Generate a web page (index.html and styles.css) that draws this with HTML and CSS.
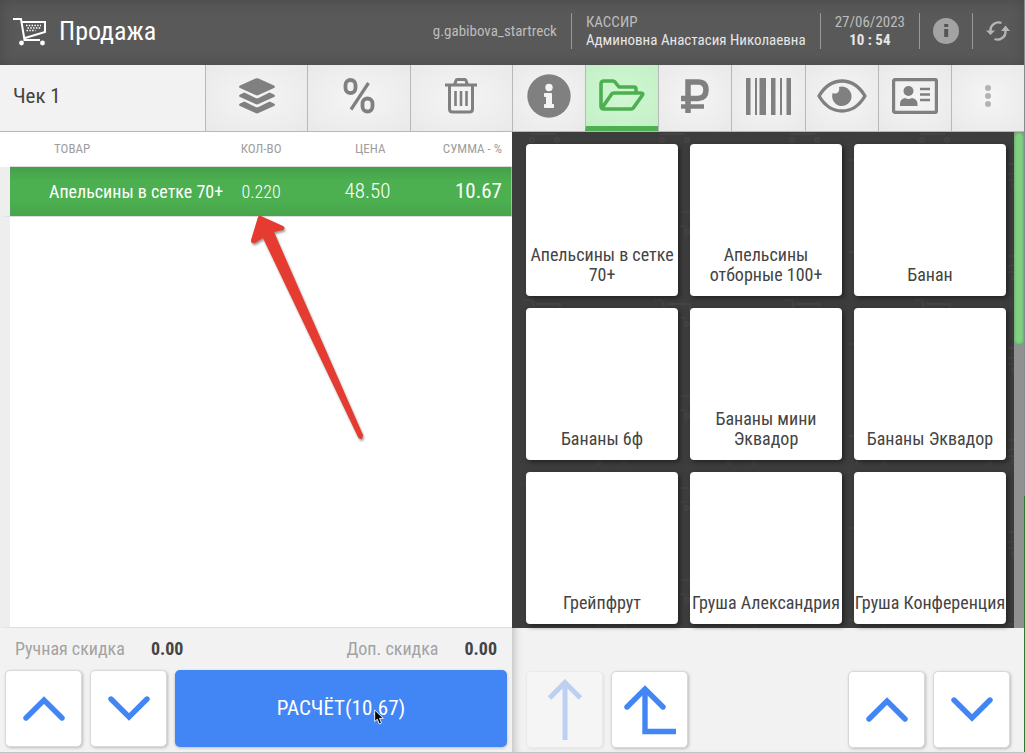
FILE: index.html
```html
<!doctype html>
<html lang="ru">
<head>
<meta charset="utf-8">
<meta name="viewport" content="width=device-width, initial-scale=1">
<title>Продажа</title>
<link rel="stylesheet" href="styles.css">
</head>
<body>

<!-- icons used more than once -->
<svg class="sprite" aria-hidden="true">
    <symbol id="up" viewBox="0 0 42 26"><path d="M3 22 21 4l18 18" fill="none" stroke="currentColor" stroke-width="5.400" stroke-linecap="round"/></symbol>
    <symbol id="down" viewBox="0 0 42 26"><path d="M3 3l18 18L39 3" fill="none" stroke="currentColor" stroke-width="5.400" stroke-linecap="round"/></symbol>
</svg>

<div class="app">
    <header class="header">
        <svg class="cart" viewBox="0 0 34 30" width="34" height="30" fill="none" stroke="#fff" stroke-width="2">
            <path d="M0 3h8l3.500 21H27M9.500 6h22.500v10L12 22"/>
            <path d="M13 9.500h15M14.500 12h13M13.500 14.500h9" stroke-width="1.500" stroke-dasharray="1.500 1.300"/>
            <circle cx="8.500" cy="27" r="2.400" fill="#fff" stroke="none"/>
            <circle cx="29.500" cy="27" r="2.400" fill="#fff" stroke="none"/>
        </svg>
        <h1>Продажа</h1>
        <div class="user">g.gabibova_startreck</div>
        <div class="cell wide">
            <span>КАССИР</span>
            <b>Админовна Анастасия Николаевна</b>
        </div>
        <div class="cell wide date">
            <span>27/06/2023</span>
            <b class="time">10 : 54</b>
        </div>
        <div class="cell">
            <button class="plain" aria-label="Информация">
                <svg viewBox="0 0 26 26" width="26" height="26"><circle cx="13" cy="13" r="13" fill="#a3a3a3"/><path d="M11.200 6h4v3h-4zM11.200 11h4v8h-4z" fill="#555"/></svg>
            </button>
        </div>
        <div class="cell">
            <button class="plain" aria-label="Обновить">
                <svg viewBox="0 0 24 24" width="24" height="24" fill="none" stroke="#b5b5b5" stroke-width="2.400">
                    <path d="M4.500 12a8 8 0 0 1 11-8M8.500 20a8 8 0 0 0 11-8"/>
                    <path d="M0 11.500h9L4.500 16zM15 12h9l-4.500-5.500z" fill="#b5b5b5" stroke="none"/>
                </svg>
            </button>
        </div>
    </header>

    <main class="panels">
        <section class="panel receipt">
            <div class="toolbar">
                <h2>Чек 1</h2>
                <button class="tool" aria-label="Отложенные чеки">
                    <svg viewBox="0 0 36 36" width="36" height="36" fill="#808080">
                        <path d="M16.500.5q1.500-.7 3 0L35 7.500q2 1.300 0 2.600l-15.500 7q-1.500.7-3 0L1 10.100q-2-1.300 0-2.600z"/>
                        <path d="M5.500 14.500 16.500 20q1.500.7 3 0l11-5.500L35 16.600q2 1.300 0 2.500l-15.500 7q-1.500.7-3 0L1 19.100q-2-1.200 0-2.500z"/>
                        <path d="M5.500 23.500 16.500 29q1.500.7 3 0l11-5.500L35 25.600q2 1.300 0 2.500l-15.500 7q-1.500.7-3 0L1 28.100q-2-1.200 0-2.500z"/>
                    </svg>
                </button>
                <button class="tool" aria-label="Скидка">
                    <svg viewBox="0 0 32 36" width="32" height="36" fill="none" stroke="#808080" stroke-width="3.800">
                        <rect x="2.500" y="2" width="10" height="13" rx="5"/>
                        <rect x="19.500" y="20.500" width="10" height="13" rx="5"/>
                        <path d="M25.500 5 8 31.500" stroke-width="3.200"/>
                    </svg>
                </button>
                <button class="tool" aria-label="Удалить">
                    <svg viewBox="0 0 32 36" width="32" height="36" fill="none" stroke="#808080" stroke-width="3">
                        <path d="M0 7h32M4.500 8v23q0 3 3 3h17q3 0 3-3V8M9.500 7l1.500-4.500q.3-1 1.500-1h7q1.200 0 1.500 1L22.500 7"/>
                        <path d="M10.500 13v15M16 13v15M21.500 13v15" stroke-width="2.600"/>
                    </svg>
                </button>
            </div>
            <table class="goods">
                <thead>
                    <tr><th class="name">ТОВАР</th><th class="qty">КОЛ-ВО</th><th class="price">ЦЕНА</th><th class="sum">СУММА - %</th></tr>
                </thead>
                <tbody>
                    <tr><td class="name">Апельсины в сетке 70+</td><td class="qty">0.220</td><td class="price">48.50</td><td class="sum">10.67</td></tr>
                </tbody>
            </table>
            <div class="empty"></div>
            <div class="discounts">
                <span>Ручная скидка</span><b>0.00</b>
                <span class="extra">Доп. скидка</span><b>0.00</b>
            </div>
            <div class="actions">
                <button class="square" aria-label="Вверх"><svg width="42" height="26"><use href="#up"/></svg></button>
                <button class="square" aria-label="Вниз"><svg width="42" height="26"><use href="#down"/></svg></button>
                <button class="pay">РАСЧЁТ(10.67)
                    <svg class="cursor" viewBox="0 0 10 16" width="10" height="16"><path d="M.7 1v11.500l2.600-2.300 2 4.800 2.200-1-2-4.600h3.800z" fill="#000" stroke="#fff" stroke-width=".9"/></svg>
                </button>
            </div>
            <svg class="pointer" viewBox="0 0 124 230" width="124" height="230">
                <path d="M18 2q1-2 3-1l22 10q3 2 0 4l-9 2 89 203q0 3-2 4-2 0-3-2L23 23l-8 5q-4 1-4-3z" fill="#e53b30"/>
            </svg>
        </section>

        <section class="panel catalog">
            <div class="toolbar">
                <button class="tool" aria-label="Информация">
                    <svg viewBox="0 0 44 44" width="44" height="44"><circle cx="22" cy="22" r="21.700" fill="#808080"/><circle cx="22" cy="13.500" r="3.700" fill="#f4f4f4"/><path d="M17.500 19.500h7v11h2v3h-9v-3h2v-8h-2z" fill="#f4f4f4" stroke="#f4f4f4"/></svg>
                </button>
                <button class="tool active" aria-label="Каталог">
                    <svg viewBox="0 0 46 32" width="46" height="32" fill="none" stroke="#4caf50" stroke-width="3.600" stroke-linejoin="round">
                        <path d="M37 13V10q0-2-2-2H20l-4-5q-1-1-2-1H5Q2 2 2 5v22q0 3 3 3h27q2 0 3-2l8.500-12q1-2-2-2H15q-2 0-3 2L3 29"/>
                    </svg>
                </button>
                <button class="tool" aria-label="Цена">
                    <svg viewBox="0 0 30 36" width="30" height="36" fill="none" stroke="#808080" stroke-width="5.500">
                        <path d="M8 35V4H18q8 0 8 8T18 20.500H1"/><path d="M1 28.500h23" stroke-width="4.500"/>
                    </svg>
                </button>
                <button class="tool" aria-label="Штрихкод">
                    <svg viewBox="0 0 45 37" width="45" height="37" fill="#808080"><path d="M0 0h4.500v37H0zM9 0h2v37H9zM13.500 0h6.500v37h-6.500zM25 0h4.500v37H25zM34 0h2v37h-2zM40.500 0H45v37h-4.500z"/></svg>
                </button>
                <button class="tool" aria-label="Просмотр">
                    <svg viewBox="0 0 50 34" width="50" height="34"><path d="M2 17Q11 2 25 2t23 15Q39 32 25 32T2 17z" fill="none" stroke="#808080" stroke-width="3.400" stroke-linejoin="round"/><path d="M22 8a9.700 9.700 0 1 1-6.300 6q4.500 1.500 6-1.500 1-2.500.3-4.500z" fill="#808080"/></svg>
                </button>
                <button class="tool" aria-label="Клиент">
                    <svg viewBox="0 0 46 36" width="46" height="36" fill="#808080">
                        <rect x="1.500" y="1.500" width="43" height="33" rx="2" fill="none" stroke="#808080" stroke-width="3.400"/>
                        <circle cx="16.500" cy="13" r="5"/><path d="M8 28v-2q0-5 5-6 3.500 2 7 0 5.500 1 5.500 6v2z"/>
                        <path d="M28 11h10M28 16.500h10M28 22h10" stroke="#808080" stroke-width="2.600"/>
                    </svg>
                </button>
                <button class="tool" aria-label="Ещё">
                    <svg viewBox="0 0 8 24" width="8" height="24" fill="#b3b3b3"><circle cx="4" cy="4" r="3"/><circle cx="4" cy="12" r="3"/><circle cx="4" cy="20" r="3"/></svg>
                </button>
            </div>
            <div class="shelf">
                <svg class="wallpaper" aria-hidden="true">
                    <defs>
                        <pattern id="carts" width="130" height="92" patternUnits="userSpaceOnUse">
                            <g fill="none" stroke="#444" stroke-width="2">
                                <path d="M12 76h8l4 16M24 80h24v8M18 2h25"/><circle cx="20" cy="8" r="2"/><circle cx="45" cy="8" r="2"/>
                                <path d="M77 28h8l5 20h25M89 32h24v9l-22 5"/><circle cx="87" cy="54" r="2"/><circle cx="112" cy="54" r="2"/>
                            </g>
                        </pattern>
                    </defs>
                    <rect width="100%" height="100%" fill="url(#carts)"/>
                </svg>
                <div class="tiles">
                    <button class="tile">Апельсины в сетке 70+</button>
                    <button class="tile">Апельсины отборные 100+</button>
                    <button class="tile">Банан</button>
                    <button class="tile">Бананы 6ф</button>
                    <button class="tile">Бананы мини Эквадор</button>
                    <button class="tile">Бананы Эквадор</button>
                    <button class="tile">Грейпфрут</button>
                    <button class="tile">Груша Александрия</button>
                    <button class="tile">Груша Конференция</button>
                </div>
                <div class="scroll"><div class="thumb"></div></div>
            </div>
            <div class="actions">
                <button class="square" disabled aria-label="В начало"><svg viewBox="0 0 36 62" width="36" height="62" fill="none" stroke="currentColor" stroke-width="5"><path d="M18 61V4M2.500 19 18 3.500 33.500 19"/></svg></button>
                <button class="square" aria-label="Назад"><svg viewBox="0 0 52 50" width="52" height="50" fill="none" stroke="currentColor" stroke-width="5.400"><path d="M21 4v42.500h31"/><path d="M3 22 21 4l18 18" stroke-linecap="round"/></svg></button>
                <button class="square push" aria-label="Вверх"><svg width="42" height="26"><use href="#up"/></svg></button>
                <button class="square" aria-label="Вниз"><svg width="42" height="26"><use href="#down"/></svg></button>
            </div>
        </section>
    </main>
</div>

</body>
</html>
```
FILE: styles.css
```css
*{
    box-sizing: border-box;
}
body{
    margin: 0;
    font-family: "Roboto Condensed", "Liberation Sans Narrow", Roboto, sans-serif;
    font-size: 18px;
    color: #444;
    background-color: #f2f2f2;
}
button{
    margin: 0;
    padding: 0;
    border: 0;
    font: inherit;
    color: inherit;
    background: none;
    cursor: pointer;
}
svg{
    display: block;
    flex: none;
}
.sprite{
    position: absolute;
    width: 0;
    height: 0;
}
.app{
    display: flex;
    flex-direction: column;
    min-height: 100vh;
    padding-right: 1px;
    border-bottom: 1px solid #c4c4c4;
    background: linear-gradient(#8a8a8a 66%, #2b7a2f 66%);
}

/* header */
.header{
    display: flex;
    align-items: center;
    height: 65px;
    padding: 0 1px 4px 13px;
    color: #bdbdbd;
    font-size: 15px;
    line-height: 18px;
    background-color: #595959;
    box-shadow: inset 0 0 14px #484848;
}
.header h1{
    margin: 0 auto 0 12px;
    font-size: 26px;
    line-height: 32px;
    font-weight: 400;
    color: #fff;
}
.user{
    margin-right: 14px;
}
.cell{
    display: flex;
    flex-direction: column;
    justify-content: center;
    height: 36px;
    padding: 0 13px;
    border-left: 1px solid #999;
}
.cell.wide{
    padding: 0 14px;
}
.cell b{
    font-weight: 400;
    color: #e6e6e6;
}
.cell .time{
    font-weight: 700;
}
.date{
    text-align: center;
}

/* two halves of the screen */
.panels{
    display: grid;
    grid-template-columns: 1fr 1fr;
    flex: 1;
    background-color: #f2f2f2;
}
.panel{
    position: relative;
    display: flex;
    flex-direction: column;
    min-width: 0;
}
.toolbar{
    display: flex;
    height: 67px;
    border-bottom: 1px solid #b8b8b8;
}
.toolbar h2{
    flex: 1;
    margin: 0;
    padding-left: 13px;
    font-size: 21px;
    line-height: 62px;
    font-weight: 400;
}
.tool{
    display: flex;
    flex: 1;
    align-items: center;
    justify-content: center;
    padding-bottom: 4px;
    border-left: 1px solid #b8b8b8;
    background: radial-gradient(#f5f5f5, #e9e9e9);
}
.receipt .tool{
    flex: 0 0 20%;
}
.tool.active{
    padding-bottom: 2px;
    border-bottom: 5px solid #4caf50;
    background: radial-gradient(#d0f8d2, #c3efc6);
}

/* receipt */
.goods{
    width: 100%;
    table-layout: fixed;
    border-collapse: collapse;
    background-color: #fff;
}
.goods th{
    height: 34px;
    padding: 0;
    font-size: 13px;
    color: #9e9e9e;
    border-bottom: 1px solid #ddd;
}
.goods td{
    height: 50px;
    padding: 0;
    color: #fff;
}
.goods tbody tr{
    background: linear-gradient(#459f49, #4caf50 30%, #4caf50 70%, #48a54c);
}
.goods .name{
    width: 46%;
    padding-left: 39px;
    text-align: left;
    white-space: nowrap;
    border-left: 10px solid #eee;
}
.goods th.name{
    padding-left: 44px;
    border-left-color: #fff;
}
.goods .qty{
    width: 10%;
    padding-right: 5px;
    text-align: center;
}
.goods .price{
    width: 21%;
    padding-right: 5px;
    text-align: right;
}
.goods .sum{
    width: 23%;
    padding-right: 10px;
    text-align: right;
}
.goods th.price{
    padding-right: 10px;
}
.goods td.qty,
.goods td.price{
    font-weight: 300;
}
.goods td.price,
.goods td.sum{
    font-size: 21px;
}
.goods thead th{
    font-weight: 400;
}
.empty{
    flex: 1;
    border-left: 10px solid #eee;
    border-top: 1px solid #ddd;
    border-bottom: 1px solid #ddd;
    background-color: #fff;
}
.discounts{
    display: flex;
    align-items: center;
    height: 42px;
    padding: 0 15px 2px;
    color: #a3a3a3;
}
.discounts b{
    margin-left: 26px;
    color: #444;
}
.extra{
    margin-left: auto;
}
.actions{
    display: flex;
    gap: 8px;
    padding: 0 5px 5px;
}
.square{
    display: flex;
    align-items: center;
    justify-content: center;
    width: 77px;
    height: 77px;
    color: #4285f4;
    background-color: #fff;
    border: 1px solid #d9d9d9;
    border-radius: 5px;
    box-shadow: 1px 1px 3px #bbb;
}
.square:disabled{
    opacity: .3;
}
.pay{
    position: relative;
    flex: 1;
    padding-bottom: 2px;
    font-size: 21px;
    color: #fff;
    background-color: #4285f4;
    border-radius: 5px;
    box-shadow: 0 1px 3px #bbb;
}
.cursor{
    position: absolute;
    left: 60%;
    top: 50%;
}
.pointer{
    position: absolute;
    left: 240px;
    top: 150px;
    filter: drop-shadow(1px 2px 1px #999);
}

/* catalog */
.catalog{
    box-shadow: inset 8px 0 8px -6px #bbb;
}
.shelf{
    position: relative;
    display: flex;
    flex: 1;
    background-color: #3d3d3d;
}
.wallpaper{
    position: absolute;
    width: 100%;
    height: 100%;
}
.tiles{
    position: relative;
    display: grid;
    flex: 1;
    grid-template-columns: repeat(3, 1fr);
    grid-auto-rows: 152px;
    gap: 12px;
    padding: 12px 8px 4px 14px;
}
.tile{
    display: flex;
    align-items: flex-end;
    justify-content: center;
    min-width: 0;
    padding-bottom: 11px;
    line-height: 20px;
    text-align: center;
    background-color: #fff;
    border-radius: 4px;
    box-shadow: 2px 2px 5px #222;
}
.scroll{
    position: relative;
    width: 10px;
    background-color: #919191;
}
.thumb{
    height: 43%;
    border-radius: 5px;
    background-color: #82d084;
    box-shadow: inset 0 0 3px #4c8f4e;
}
.catalog .actions{
    padding: 43px 14px 4px;
}
.push{
    margin-left: auto;
}
```
